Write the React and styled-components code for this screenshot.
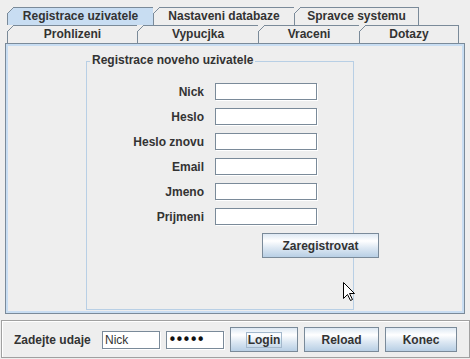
import { Fragment } from "react";
import styled, { createGlobalStyle } from "styled-components";

const GlobalStyle = createGlobalStyle`
  html, body {
    margin: 0;
    padding: 0;
    background: #eeeeee;
  }
  body {
    font-family: "Liberation Sans", Arial, sans-serif;
  }
`;

const Window = styled.div`
  position: relative;
  width: 470px;
  height: 359px;
  box-sizing: border-box;
  padding-top: 7px;
  background: #eeeeee;
  overflow: hidden;
  display: flex;
  flex-direction: column;
  color: #333333;
`;

const TabArea = styled.div`
  margin-left: 7px;
  display: flex;
  flex-direction: column;
`;

const TabRow = styled.div`
  display: flex;
  height: 18px;
`;

const Tab = styled.div`
  position: relative;
  box-sizing: border-box;
  width: ${(p) => p.$w}px;
  height: 18px;
  margin-left: -1px;
  &:first-child {
    margin-left: 0;
  }
  border: 1px solid #7a8a99;
  border-bottom: none;
  background: ${(p) => (p.$selected ? "#c8ddf2" : "#eeeeee")};
  font-weight: 700;
  font-size: 12px;
  line-height: 17px;
  text-align: center;
  white-space: nowrap;
  &::before {
    content: "";
    position: absolute;
    top: -1px;
    left: -1px;
    width: 7px;
    height: 7px;
    background: linear-gradient(
      to bottom right,
      #eeeeee calc(50% - 0.7px),
      #7a8a99 calc(50% - 0.7px),
      #7a8a99 calc(50% + 0.7px),
      transparent calc(50% + 0.7px)
    );
  }
`;

const Panel = styled.div`
  box-sizing: border-box;
  margin-left: 5px;
  width: 460px;
  height: 271px;
  border: 1px solid #7a8a99;
  box-shadow: inset 0 0 0 2px #c8ddf2;
  padding: 17px 0 0 80px;
`;

const Group = styled.div`
  position: relative;
  box-sizing: border-box;
  width: 268px;
  height: 249px;
  border: 1px solid #b8cfe5;
  padding-top: 21px;
`;

const GroupTitle = styled.span`
  position: absolute;
  top: -9px;
  left: 3px;
  padding: 0 2px;
  background: #eeeeee;
  font-weight: 700;
  font-size: 12px;
  line-height: 15px;
  white-space: nowrap;
`;

const Form = styled.div`
  display: grid;
  grid-template-columns: 117px 103px;
  grid-template-rows: repeat(6, 18px) 25px;
  column-gap: 11px;
  row-gap: 7px;
`;

const Label = styled.label`
  text-align: right;
  font-weight: 700;
  font-size: 12px;
  line-height: 19px;
  white-space: nowrap;
`;

const Field = styled.input`
  box-sizing: border-box;
  width: ${(p) => p.$w || 102}px;
  height: ${(p) => p.$h || 17}px;
  margin: 0;
  padding: 0 2px;
  border: 1px solid #7a8a99;
  border-radius: 0;
  box-shadow: 1px 1px 0 #ffffff;
  background: #ffffff;
  font-family: "Liberation Sans", Arial, sans-serif;
  font-size: 12px;
  color: #333333;
  outline: none;
`;

const PasswordField = styled(Field)`
  font-family: "DejaVu Sans", sans-serif;
  font-size: 15px;
  letter-spacing: -1.8px;
  padding: 0 1px;
  color: #111111;
`;

const Button = styled.button`
  box-sizing: border-box;
  width: ${(p) => p.$w}px;
  height: 25px;
  margin: 0;
  padding: 0;
  border: 1px solid #7a8a99;
  border-radius: 0;
  background: linear-gradient(
    to bottom,
    #dde8f3 0%,
    #ffffff 30%,
    #dde8f3 60%,
    #b8cfe5 100%
  );
  font-family: "Liberation Sans", Arial, sans-serif;
  font-weight: 700;
  font-size: 12px;
  color: #333333;
  display: flex;
  align-items: center;
  justify-content: center;
`;

const RegisterButton = styled(Button)`
  grid-column: 2;
  margin-left: 47px;
`;

const Focus = styled.span`
  border: 1px solid #a3b8cc;
  padding: 0 1px;
  line-height: 14px;
`;

const LoginBar = styled.div`
  box-sizing: border-box;
  margin: 6px 0 0 1px;
  width: 469px;
  height: 38px;
  border: 1px solid #a0a0a0;
  box-shadow: inset 1px 1px 0 #ffffff;
  padding-top: 1px;
  display: flex;
  align-items: center;
  justify-content: center;
  gap: 6px;
`;

const BarLabel = styled.span`
  width: 82px;
  font-weight: 700;
  font-size: 12px;
  white-space: nowrap;
`;

const Cursor = styled.svg`
  position: absolute;
  left: 343px;
  top: 282px;
`;

const rowOne = [
  { name: "Registrace uzivatele", w: 147, selected: true },
  { name: "Nastaveni databaze", w: 142 },
  { name: "Spravce systemu", w: 125 },
];

const rowTwo = [
  { name: "Prohlizeni", w: 131 },
  { name: "Vypucjka", w: 122 },
  { name: "Vraceni", w: 102 },
  { name: "Dotazy", w: 100 },
];

const fields = ["Nick", "Heslo", "Heslo znovu", "Email", "Jmeno", "Prijmeni"];

const App = () => {
  return (
    <>
      <GlobalStyle />
      <Window>
        <TabArea>
          <TabRow>
            {rowOne.map((t) => (
              <Tab key={t.name} $w={t.w} $selected={t.selected}>
                {t.name}
              </Tab>
            ))}
          </TabRow>
          <TabRow>
            {rowTwo.map((t) => (
              <Tab key={t.name} $w={t.w}>
                {t.name}
              </Tab>
            ))}
          </TabRow>
        </TabArea>
        <Panel>
          <Group>
            <GroupTitle>Registrace noveho uzivatele</GroupTitle>
            <Form>
              {fields.map((f) => (
                <Fragment key={f}>
                  <Label>{f}</Label>
                  <Field />
                </Fragment>
              ))}
              <RegisterButton $w={117}>Zaregistrovat</RegisterButton>
            </Form>
          </Group>
        </Panel>
        <LoginBar>
          <BarLabel>Zadejte udaje</BarLabel>
          <Field $w={58} $h={18} defaultValue="Nick" />
          <PasswordField $w={58} $h={18} type="password" defaultValue="heslo" />
          <Button $w={68}>
            <Focus>Login</Focus>
          </Button>
          <Button $w={75}>Reload</Button>
          <Button $w={72}>Konec</Button>
        </LoginBar>
        <Cursor width="13" height="20" viewBox="0 0 13 20">
          <path
            d="M0.5 0.5 L0.5 16.5 L4.5 12.5 L7.5 18.5 L9.5 17.5 L6.5 11.5 L11.5 11.5 Z"
            fill="#ffffff"
            stroke="#000000"
            strokeWidth="1"
          />
        </Cursor>
      </Window>
    </>
  );
};

export default App;
